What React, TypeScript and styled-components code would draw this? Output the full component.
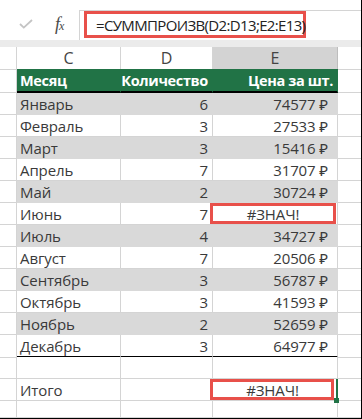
import React from 'react';
import styled, { createGlobalStyle, css } from 'styled-components';

const GlobalStyle = createGlobalStyle`
  html, body {
    margin: 0;
    padding: 0;
    background: #fff;
  }
  body {
    font-family: "Segoe UI", "Open Sans", "Noto Sans", sans-serif;
  }
`;

const GRID = '#d4d4d4';
const GREEN = '#217346';
const BAND = '#d9d9d9';
const RED = '#e8504a';

const Frame = styled.div`
  width: 362px;
  height: 419px;
  box-sizing: border-box;
  border-right: 1px solid #000;
  border-bottom: 1px solid #000;
  overflow: hidden;
  display: flex;
  flex-direction: column;
  background: #fff;
`;

const FormulaBar = styled.div`
  display: flex;
  height: 40px;
  flex: none;
`;

const NameArea = styled.div`
  width: 79px;
  display: flex;
  align-items: center;
  gap: 22px;
  padding: 8px 0 0 19px;
  box-sizing: border-box;
`;

const Fx = styled.span`
  font-family: "Liberation Serif", serif;
  font-style: italic;
  font-size: 18px;
  color: #4a4a4a;
  letter-spacing: -1px;

  small {
    font-size: 12px;
  }
`;

const FormulaField = styled.div`
  flex: 1;
  margin-top: 10px;
  border-top: 1px solid ${GRID};
  border-left: 1px solid ${GRID};
  padding-left: 4px;
`;

const FormulaBox = styled.div`
  width: 222px;
  height: 27px;
  box-sizing: border-box;
  border: 3px solid ${RED};
  display: flex;
  align-items: center;
  padding-left: 9px;
  font-size: 15px;
  letter-spacing: -0.65px;
  color: #222;
  white-space: nowrap;
`;

const Band = styled.div`
  height: 7px;
  flex: none;
  background: #ebebeb;
`;

const Row = styled.div<{ $h?: number }>`
  display: grid;
  grid-template-columns: 17px 104px 92px 125px 1fr;
  height: ${(p) => (p.$h ? `${p.$h}px` : 'auto')};
  flex: ${(p) => (p.$h ? 'none' : '1')};
`;

const RowHead = styled.div`
  border-right: 1px solid ${GRID};
  border-bottom: 1px solid ${GRID};
`;

const Spare = styled.div`
  border-bottom: 1px solid ${GRID};
`;

const ColHead = styled.div<{ $active?: boolean }>`
  display: flex;
  align-items: center;
  justify-content: center;
  font-size: 16px;
  color: #444;
  border-right: 1px solid ${(p) => (p.$active ? '#bdbdbd' : GRID)};
  border-bottom: 1px solid ${GRID};
  background: ${(p) => (p.$active ? '#d3d3d3' : '#fff')};
`;

type Tone = 'head' | 'band' | 'plain';

const fills: Record<Tone, string> = {
  head: GREEN,
  band: BAND,
  plain: '#fff',
};

const Cell = styled.div<{
  $tone: Tone;
  $align?: 'left' | 'right' | 'center';
  $rule?: boolean;
  $pad?: number;
  $flag?: boolean;
  $selected?: boolean;
}>`
  position: relative;
  box-sizing: border-box;
  display: flex;
  align-items: center;
  justify-content: ${(p) =>
    p.$align === 'right' ? 'flex-end' : p.$align === 'center' ? 'center' : 'flex-start'};
  padding: 1px ${(p) => (p.$align === 'right' ? p.$pad ?? 4 : 4)}px 0 ${(p) =>
      p.$align === 'left' || !p.$align ? 3 : 0}px;
  background: ${(p) => fills[p.$tone]};
  border-right: 1px solid ${(p) => (p.$tone === 'plain' ? GRID : fills[p.$tone])};
  border-bottom: ${(p) =>
    p.$rule ? '2px solid #000' : `1px solid ${p.$tone === 'plain' ? GRID : fills[p.$tone]}`};
  font-size: ${(p) => (p.$tone === 'head' ? 14.5 : 15)}px;
  letter-spacing: ${(p) => (p.$tone === 'head' ? '-0.35px' : '-0.1px')};
  white-space: nowrap;
  color: ${(p) => (p.$tone === 'head' ? '#fff' : '#3a3a3a')};
  font-weight: ${(p) => (p.$tone === 'head' ? 700 : 400)};

  ${(p) =>
    p.$flag &&
    css`
      &::after {
        content: '';
        position: absolute;
        top: 0;
        bottom: 0;
        left: -3px;
        right: ${p.$selected ? 2 : 1}px;
        border: 3px solid ${RED};
      }
    `}

  ${(p) =>
    p.$selected &&
    css`
      border-right: 2px solid ${GREEN};
    `}
`;

const Handle = styled.span`
  position: absolute;
  right: -3px;
  bottom: -3px;
  width: 5px;
  height: 5px;
  background: ${GREEN};
  z-index: 1;
`;

type Month = { name: string; qty: number; price: number | null };

const months: Month[] = [
  { name: 'Январь', qty: 6, price: 74577 },
  { name: 'Февраль', qty: 3, price: 27533 },
  { name: 'Март', qty: 3, price: 15416 },
  { name: 'Апрель', qty: 7, price: 31707 },
  { name: 'Май', qty: 2, price: 30724 },
  { name: 'Июнь', qty: 7, price: null },
  { name: 'Июль', qty: 4, price: 34727 },
  { name: 'Август', qty: 7, price: 20506 },
  { name: 'Сентябрь', qty: 3, price: 56787 },
  { name: 'Октябрь', qty: 3, price: 41593 },
  { name: 'Ноябрь', qty: 2, price: 52659 },
  { name: 'Декабрь', qty: 3, price: 64977 },
];

function CheckIcon() {
  return (
    <svg width="14" height="10" viewBox="0 0 14 10">
      <polyline points="1,5 4.8,8.6 13,1" fill="none" stroke="#c4c4c4" strokeWidth="1.8" />
    </svg>
  );
}

export default function App() {
  return (
    <Frame>
      <GlobalStyle />
      <FormulaBar>
        <NameArea>
          <CheckIcon />
          <Fx>
            f<small>x</small>
          </Fx>
        </NameArea>
        <FormulaField>
          <FormulaBox>=СУММПРОИЗВ(D2:D13;E2:E13)</FormulaBox>
        </FormulaField>
      </FormulaBar>
      <Band />
      <Row $h={22}>
        <RowHead />
        <ColHead>C</ColHead>
        <ColHead>D</ColHead>
        <ColHead $active>E</ColHead>
        <Spare />
      </Row>
      <Row $h={24}>
        <RowHead />
        <Cell $tone="head" $rule>Месяц</Cell>
        <Cell $tone="head" $rule $align="right">Количество</Cell>
        <Cell $tone="head" $rule $align="right">Цена за шт.</Cell>
        <Spare />
      </Row>
      {months.map((m, i) => {
        const tone: Tone = i % 2 === 0 ? 'band' : 'plain';
        const last = i === months.length - 1;
        return (
          <Row $h={22} key={m.name}>
            <RowHead />
            <Cell $tone={tone} $rule={last}>{m.name}</Cell>
            <Cell $tone={tone} $rule={last} $align="right">{m.qty}</Cell>
            {m.price === null ? (
              <Cell $tone={tone} $rule={last} $align="center" $flag>#ЗНАЧ!</Cell>
            ) : (
              <Cell $tone={tone} $rule={last} $align="right" $pad={9}>
                {m.price} ₽
              </Cell>
            )}
            <Spare />
          </Row>
        );
      })}
      <Row $h={22}>
        <RowHead />
        <Cell $tone="plain" />
        <Cell $tone="plain" />
        <Cell $tone="plain" />
        <Spare />
      </Row>
      <Row $h={22}>
        <RowHead />
        <Cell $tone="plain">Итого</Cell>
        <Cell $tone="plain" />
        <Cell $tone="plain" $align="center" $flag $selected>
          #ЗНАЧ!
          <Handle />
        </Cell>
        <Spare />
      </Row>
      <Row>
        <RowHead />
        <Cell $tone="plain" />
        <Cell $tone="plain" />
        <Cell $tone="plain" />
        <Spare />
      </Row>
    </Frame>
  );
}
